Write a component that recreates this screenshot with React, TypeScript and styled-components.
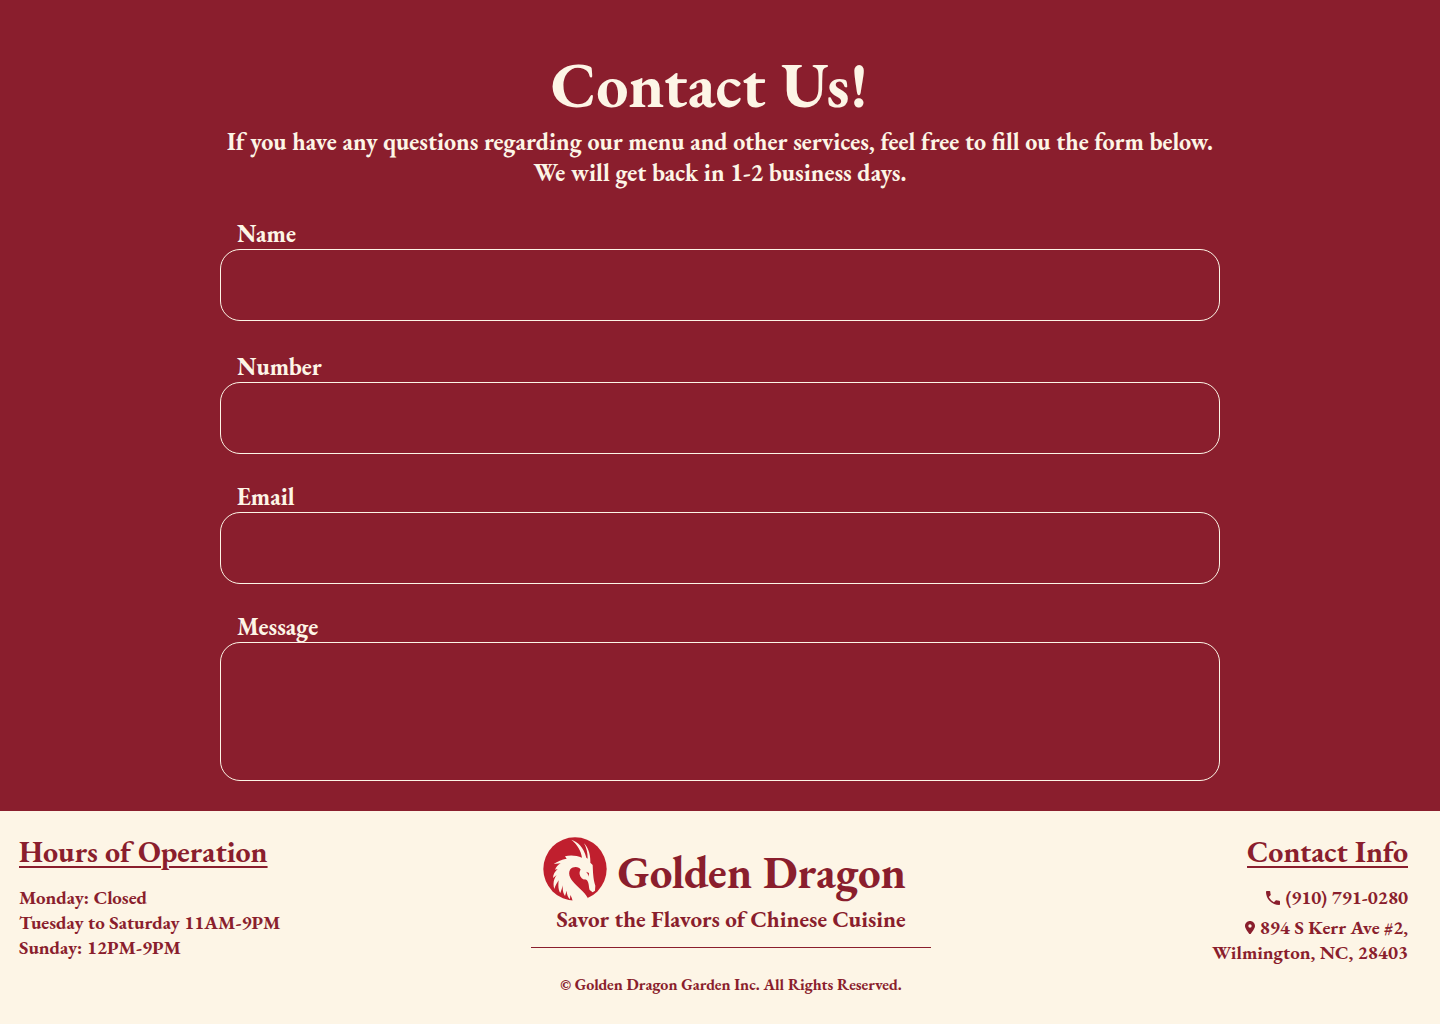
import React from "react";
import styled, { createGlobalStyle } from "styled-components";

const maroon = "#8a1e2d";
const cream = "#fdf5e6";

const GlobalStyle = createGlobalStyle`
  *, *::before, *::after { box-sizing: border-box; }
  body {
    margin: 0;
    background: ${maroon};
    font-family: "EB Garamond", "Liberation Serif", serif;
    font-weight: 700;
  }
`;

const Page = styled.div`
  width: 1440px;
  height: 1024px;
  display: flex;
  flex-direction: column;
  overflow: hidden;
`;

const Main = styled.main`
  height: 811px;
  padding-top: 44px;
  display: flex;
  flex-direction: column;
  align-items: center;
  background: ${maroon};
  color: ${cream};
`;

const Title = styled.h1`
  margin: 0;
  padding-right: 21px;
  font-size: 64px;
  line-height: 82px;
`;

const Intro = styled.p`
  margin: 0 0 30px;
  font-size: 24px;
  line-height: 31px;
  text-align: center;
  white-space: nowrap;
`;

const Form = styled.form`
  width: 1000px;
  display: flex;
  flex-direction: column;
`;

const Field = styled.div<{ $gap: number }>`
  display: flex;
  flex-direction: column;
  margin-bottom: ${(p) => p.$gap}px;
`;

const Label = styled.label`
  padding-left: 17px;
  font-size: 24px;
  line-height: 31px;
`;

const Input = styled.input`
  height: 72px;
  padding: 0 18px;
  border: 1px solid ${cream};
  border-radius: 20px;
  background: transparent;
  color: ${cream};
  font: inherit;
  outline: none;
`;

const TextArea = styled.textarea`
  height: 139px;
  padding: 12px 18px;
  border: 1px solid ${cream};
  border-radius: 20px;
  background: transparent;
  color: ${cream};
  font: inherit;
  outline: none;
  resize: none;
`;

const Footer = styled.footer`
  height: 213px;
  padding: 0 32px 0 19px;
  display: grid;
  grid-template-columns: 512px 400px 1fr;
  background: ${cream};
  color: ${maroon};
`;

const Column = styled.section<{ $end?: boolean }>`
  padding-top: 21px;
  display: flex;
  flex-direction: column;
  align-items: ${(p) => (p.$end ? "flex-end" : "flex-start")};
`;

const Heading = styled.h2`
  margin: 0 0 14px;
  font-size: 30px;
  line-height: 39px;
  text-decoration: underline;
  text-decoration-thickness: 1.5px;
  text-underline-offset: 3.5px;
`;

const Line = styled.div<{ $gap?: number }>`
  display: flex;
  align-items: center;
  margin-bottom: ${(p) => p.$gap ?? 0}px;
  font-size: 19px;
  line-height: 25px;
  white-space: nowrap;
`;

const Center = styled.section`
  display: flex;
  flex-direction: column;
  align-items: center;
`;

const Brand = styled.div`
  width: 376px;
  height: 68px;
  margin-top: 25px;
  display: flex;
  align-items: flex-start;
  gap: 10.5px;
`;

const Logo = styled.svg`
  flex: none;
  margin-top: 1px;
`;

const BrandName = styled.span`
  padding-top: 7px;
  font-size: 45px;
  line-height: 59px;
  white-space: nowrap;
`;

const Tagline = styled.p`
  margin: 0;
  font-size: 23px;
  line-height: 30px;
  white-space: nowrap;
`;

const Rule = styled.hr`
  width: 400px;
  height: 1px;
  margin: 13px 0 26px;
  border: 0;
  background: ${maroon};
`;

const Copyright = styled.p`
  margin: 0;
  font-size: 16px;
  line-height: 21px;
  white-space: nowrap;
`;

const LineIcon = styled.svg`
  flex: none;
  margin-right: 5px;
`;

function DragonLogo() {
  return (
    <Logo width="64" height="64" viewBox="24 20 192 192" aria-hidden="true">
      <circle cx="120" cy="116" r="95" fill="#c01f2e" />
      <path
        fill={cream}
        d="M109 28 C128 34 146 50 154 82 L158 85 C158 66 154 52 147 39 C159 52 167 70 166 97 L173 104 C174 122 174 146 181 166 L180 181 L173 186 L164 179 C161 172 163 160 156 150 C150 146 144 150 138 141 C131 130 134 122 137 118 C133 108 114 107 106 117 C98 129 105 143 113 153 C126 170 148 184 158 202 L154 216 L113 213 C111 203 109 199 106 194 L105 207 C99 201 95 192 95 181 L90 197 C84 188 82 178 84 165 L76 188 C70 179 69 168 71 150 C66 158 61 165 58 176 C53 160 56 146 65 134 L54 143 C54 132 60 124 68 116 L60 118 C63 110 69 104 77 99 L56 101 C68 92 80 88 95 85 L90 78 C105 73 125 75 141 82 C138 62 128 43 109 28 Z"
      />
      <path fill="#c01f2e" d="M153 124 L162 128 L161 139 C160 132 157 128 153 124 Z" />
    </Logo>
  );
}

const fields = [
  { id: "name", label: "Name", gap: 30 },
  { id: "number", label: "Number", gap: 27 },
  { id: "email", label: "Email", gap: 27 },
];

export default function App() {
  return (
    <Page>
      <GlobalStyle />
      <Main>
        <Title>Contact Us!</Title>
        <Intro>
          If you have any questions regarding our menu and other services, feel free to fill ou the form below.
          <br />
          We will get back in 1-2 business days.
        </Intro>
        <Form>
          {fields.map((f) => (
            <Field key={f.id} $gap={f.gap}>
              <Label htmlFor={f.id}>{f.label}</Label>
              <Input id={f.id} />
            </Field>
          ))}
          <Field $gap={0}>
            <Label htmlFor="message">Message</Label>
            <TextArea id="message" />
          </Field>
        </Form>
      </Main>
      <Footer>
        <Column>
          <Heading>Hours of Operation</Heading>
          <Line>Monday: Closed</Line>
          <Line>Tuesday to Saturday 11AM-9PM</Line>
          <Line>Sunday: 12PM-9PM</Line>
        </Column>
        <Center>
          <Brand>
            <DragonLogo />
            <BrandName>Golden Dragon</BrandName>
          </Brand>
          <Tagline>Savor the Flavors of Chinese Cuisine</Tagline>
          <Rule />
          <Copyright>© Golden Dragon Garden Inc. All Rights Reserved.</Copyright>
        </Center>
        <Column $end>
          <Heading>Contact Info</Heading>
          <Line $gap={5}>
            <LineIcon width="14" height="14" viewBox="3 3 18 18" fill={maroon}>
              <path d="M6.62 10.79c1.44 2.83 3.76 5.14 6.59 6.59l2.2-2.2c.27-.27.67-.36 1.02-.24 1.12.37 2.33.57 3.57.57.55 0 1 .45 1 1V20c0 .55-.45 1-1 1-9.39 0-17-7.61-17-17 0-.55.45-1 1-1h3.5c.55 0 1 .45 1 1 0 1.25.2 2.45.57 3.57.11.35.03.74-.25 1.02l-2.2 2.2z" />
            </LineIcon>
            (910) 791-0280
          </Line>
          <Line>
            <LineIcon width="10" height="13.4" viewBox="0 0 384 512" fill={maroon}>
              <path d="M215.7 499.2C267 435 384 279.4 384 192C384 86 298 0 192 0S0 86 0 192c0 87.4 117 243 168.3 307.2c12.3 15.3 35.1 15.3 47.4 0zM192 128a64 64 0 1 1 0 128 64 64 0 1 1 0-128z" />
            </LineIcon>
            894 S Kerr Ave #2,
          </Line>
          <Line>Wilmington, NC, 28403</Line>
        </Column>
      </Footer>
    </Page>
  );
}
